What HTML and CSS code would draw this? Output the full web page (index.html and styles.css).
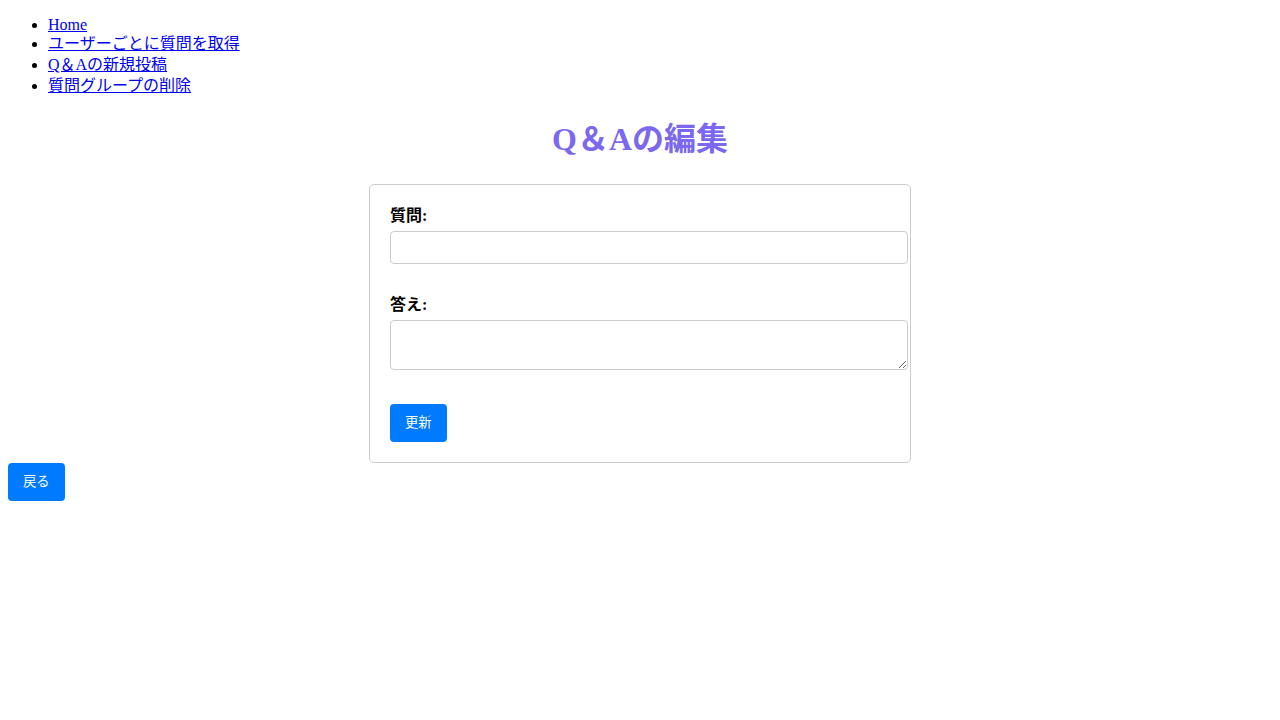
FILE: index.html
```html
<!DOCTYPE html>
<html>
<head>
<meta charset="utf-8">
<title>Q＆Aの編集</title>
<link rel="stylesheet" href="styles.css">
</head>
<body>
<ul class="nav">
  <li class="nav-item nav-item-latin"><a href="#">Home</a></li>
  <li class="nav-item"><a href="#">ユーザーごとに質問を取得</a></li>
  <li class="nav-item"><a href="#">Q＆Aの新規投稿</a></li>
  <li class="nav-item"><a href="#">質問グループの削除</a></li>
</ul>
<h1 class="title">Q＆Aの編集</h1>
<form class="qa-form">
  <div class="form-group">
    <label class="field-label" for="question">質問:</label>
    <input class="field-input" type="text" id="question">
  </div>
  <div class="form-group">
    <label class="field-label" for="answer">答え:</label>
    <textarea class="field-input field-textarea" id="answer"></textarea>
  </div>
  <button class="btn" type="button">更新</button>
</form>
<button class="btn" type="button">戻る</button>
</body>
</html>
```
FILE: styles.css
```css
body {
  margin: 8px;
  font-family: "Liberation Serif", "Noto Sans CJK JP", serif;
  font-size: 16px;
  color: #000;
}
.nav {
  margin: 8px 0 16px;
  padding-left: 40px;
}
.nav-item {
  line-height: 21px;
}
.nav-item-latin {
  line-height: 17.4px;
}
.nav a {
  color: #0000ee;
}
.title {
  text-align: center;
  color: #7b68ee;
  font-size: 32px;
  line-height: 43px;
  margin: 21.44px 0 23.44px;
}
.qa-form {
  max-width: 500px;
  margin: 0 auto;
  padding: 20px;
  border: 1px solid #ccc;
  border-radius: 5px;
  line-height: 21px;
}
.form-group {
  margin-bottom: 15px;
}
.field-label {
  display: block;
  font-weight: bold;
  margin-bottom: 5px;
  line-height: 21px;
}
.field-input {
  width: 100%;
  padding: 8px;
  margin-bottom: 15px;
  border: 1px solid #ccc;
  border-radius: 4px;
  font-family: "Liberation Sans", "Noto Sans CJK JP", sans-serif;
  font-size: 13.333px;
  line-height: 15px;
  vertical-align: top;
}
.field-textarea {
  line-height: 16px;
  height: 32px;
  margin-bottom: 19px;
}
.btn {
  background-color: #007bff;
  color: #fff;
  border: none;
  border-radius: 4px;
  padding: 10px 15px;
  font-family: "Liberation Sans", "Noto Sans CJK JP", sans-serif;
  font-size: 13.333px;
  line-height: 18px;
  cursor: pointer;
}
```
